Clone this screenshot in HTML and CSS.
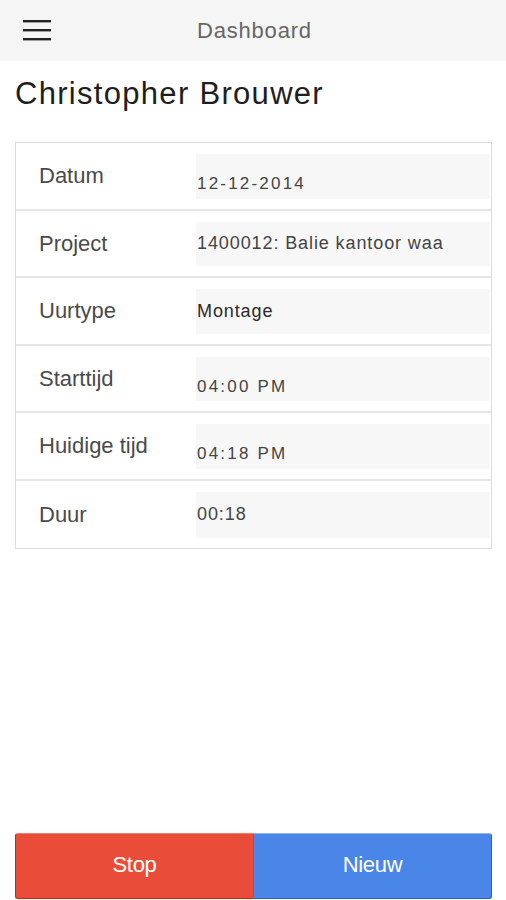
FILE: index.html
```html
<!DOCTYPE html>
<html lang="nl">
<head>
    <meta charset="UTF-8">
    <meta name="viewport" content="width=device-width, initial-scale=1.0">
    <title>Dashboard</title>
    <link rel="stylesheet" href="styles.css">
</head>
<body>
    <header class="topbar">
        <button class="menu-btn" aria-label="Menu">
            <svg width="30" height="22" viewBox="0 0 30 22">
                <rect x="1" y="1" width="28" height="2.4" fill="#222"/>
                <rect x="1" y="10" width="28" height="2.4" fill="#222"/>
                <rect x="1" y="19" width="28" height="2.4" fill="#222"/>
            </svg>
        </button>
        <div class="title">Dashboard</div>
    </header>

    <main class="content">
        <h1 class="name">Christopher Brouwer</h1>
        <div class="details">
            <div class="row">
                <div class="label">Datum</div>
                <div class="value value-time">12-12-2014</div>
            </div>
            <div class="row">
                <div class="label">Project</div>
                <div class="value">1400012: Balie kantoor waa</div>
            </div>
            <div class="row">
                <div class="label">Uurtype</div>
                <div class="value value-dark">Montage</div>
            </div>
            <div class="row">
                <div class="label">Starttijd</div>
                <div class="value value-time">04:00&nbsp;PM</div>
            </div>
            <div class="row">
                <div class="label">Huidige tijd</div>
                <div class="value value-time">04:18&nbsp;PM</div>
            </div>
            <div class="row">
                <div class="label">Duur</div>
                <div class="value">00:18</div>
            </div>
        </div>
    </main>

    <footer class="actions">
        <button class="btn btn-stop">Stop</button>
        <button class="btn btn-new">Nieuw</button>
    </footer>
</body>
</html>
```

FILE: styles.css
```css
html, body {
    margin: 0;
    height: 100%;
}
body {
    font-family: "Liberation Sans", Arial, sans-serif;
    background-color: #fff;
    color: #222;
    display: flex;
    flex-direction: column;
    min-height: 900px;
}
.topbar {
    height: 61px;
    background: #f5f5f5;
    display: flex;
    align-items: center;
    position: relative;
}
.menu-btn {
    border: none;
    background: none;
    padding: 0;
    margin-left: 22px;
    margin-top: -2px;
    width: 30px;
    height: 22px;
    cursor: pointer;
}
.menu-btn svg {
    display: block;
}
.title {
    position: absolute;
    left: 197px;
    top: 18px;
    font-size: 22px;
    letter-spacing: 0.8px;
    color: #666;
}
.content {
    flex: 1;
    padding: 0 14px 0 15px;
}
.name {
    margin: 15px 0 30px;
    font-size: 31px;
    font-weight: normal;
    line-height: 36px;
    letter-spacing: 1.3px;
    color: #1e1e1e;
}
.details {
    border: 1px solid #dcdcdc;
}
.row {
    display: flex;
    height: 67.5px;
    box-sizing: border-box;
    padding: 11px 1px 10px 0;
    border-bottom: 2px solid #e6e6e6;
}
.row:last-child {
    border-bottom: none;
}
.label {
    width: 180px;
    padding-left: 23px;
    box-sizing: border-box;
    font-size: 22px;
    color: #4a4a4a;
    display: flex;
    align-items: center;
}
.value {
    flex: 1;
    background: #f7f7f7;
    font-size: 18px;
    letter-spacing: 0.9px;
    color: #444;
    display: flex;
    align-items: center;
    padding-left: 1px;
}
.value-time {
    font-size: 17px;
    letter-spacing: 2.2px;
    padding-top: 16px;
    box-sizing: border-box;
}
.value-dark {
    color: #2a2a2a;
}
.actions {
    display: flex;
    padding: 0 14px 1px 15px;
}
.btn {
    flex: 1;
    height: 66px;
    border: none;
    color: #fff;
    font-family: "Liberation Sans", Arial, sans-serif;
    font-size: 22px;
    letter-spacing: -0.3px;
    padding-bottom: 4px;
    cursor: pointer;
}
.btn-stop {
    background: #ea4c3a;
    border-left: 1px solid #c1271a;
    border-bottom: 1px solid #c1271a;
    border-top: 1px solid #f07a6d;
    border-radius: 3px 0 0 3px;
}
.btn-new {
    background: #4a86e8;
    border-right: 1px solid #2a5fc4;
    border-bottom: 1px solid #2a5fc4;
    border-top: 1px solid #8fb4f0;
    border-left: 1px solid #3a72d4;
    border-radius: 0 3px 3px 0;
}
```
